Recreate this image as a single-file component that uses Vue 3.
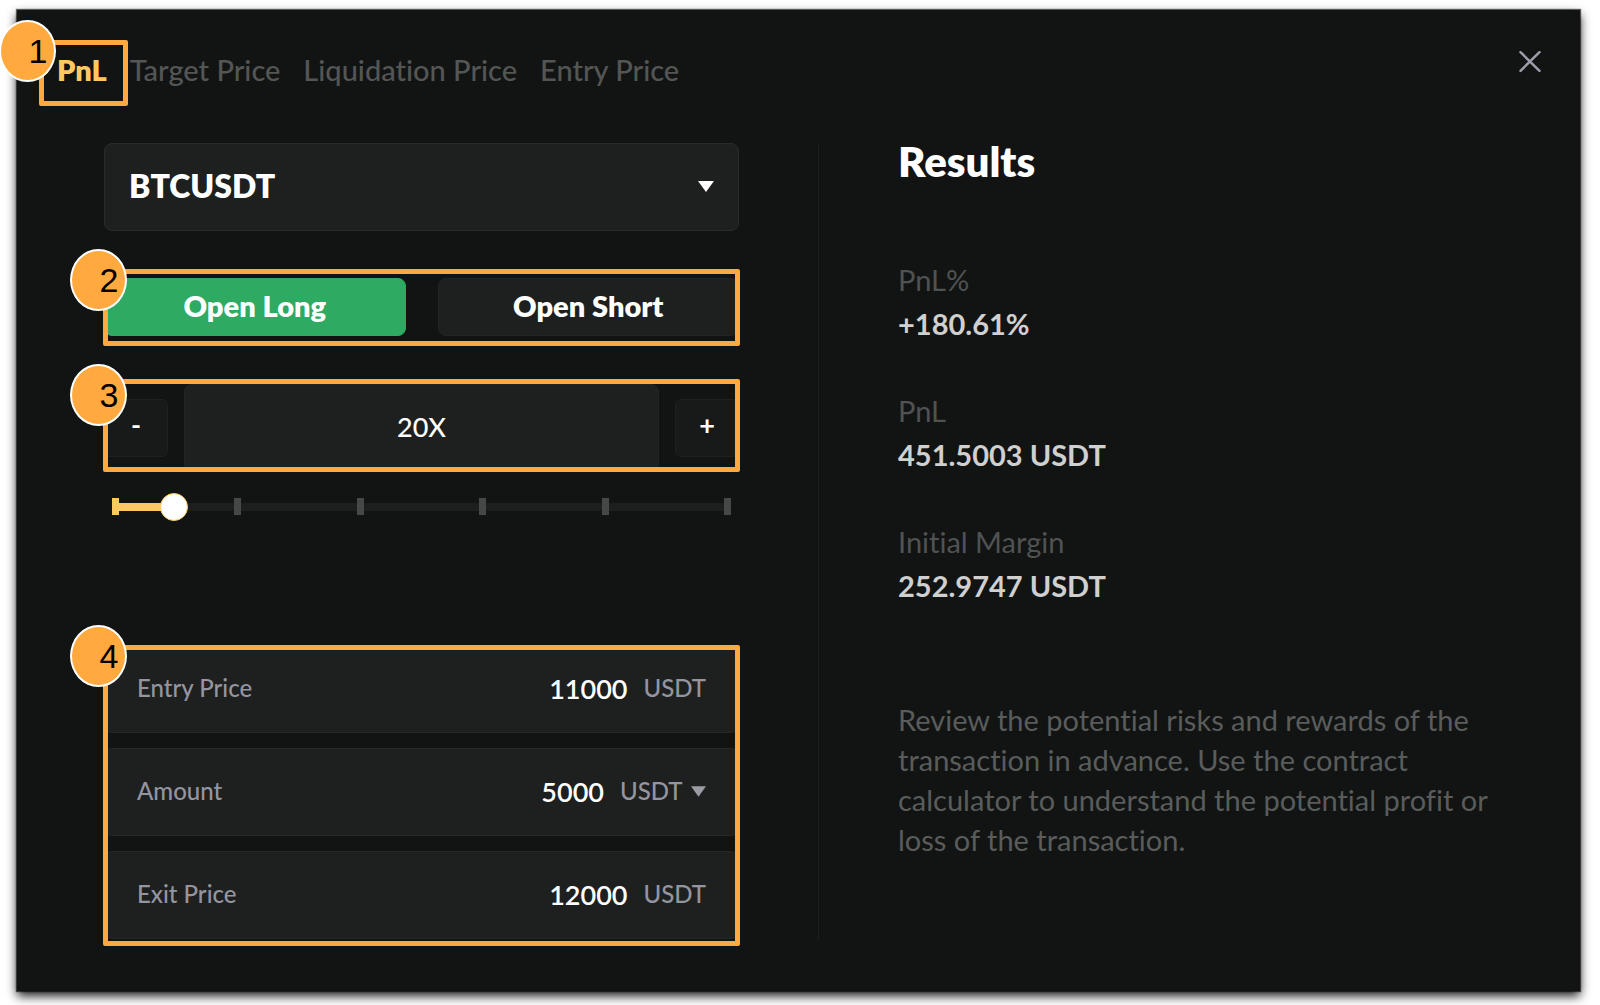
<script setup>
import { ref, computed } from 'vue'

const tabs = ['PnL', 'Target Price', 'Liquidation Price', 'Entry Price']
const activeTab = ref('PnL')
const pair = ref('BTCUSDT')
const side = ref('long')

const MIN_LEVERAGE = 1
const MAX_LEVERAGE = 200
const leverage = ref(20)
const leverageLabel = computed(() => `${leverage.value}X`)
const filled = computed(
  () => ((leverage.value - MIN_LEVERAGE) / (MAX_LEVERAGE - MIN_LEVERAGE)) * 100
)
function step(by) {
  leverage.value = Math.min(MAX_LEVERAGE, Math.max(MIN_LEVERAGE, Number(leverage.value) + by))
}

const fields = ref([
  { id: 'entry', label: 'Entry Price', value: '11000', unit: 'USDT', choice: false },
  { id: 'amount', label: 'Amount', value: '5000', unit: 'USDT', choice: true },
  { id: 'exit', label: 'Exit Price', value: '12000', unit: 'USDT', choice: false },
])

const results = [
  { label: 'PnL%', value: '+180.61%' },
  { label: 'PnL', value: '451.5003 USDT' },
  { label: 'Initial Margin', value: '252.9747 USDT' },
]
</script>

<template>
  <div class="page">
    <section class="dialog">
      <header class="header">
        <nav class="tabs">
          <div v-for="tab in tabs" :key="tab" class="tab-slot">
            <button
              type="button"
              class="tab"
              :class="{ active: tab === activeTab }"
              @click="activeTab = tab"
            >{{ tab }}</button>
            <div v-if="tab === 'PnL'" class="mark mark-tab"><span class="badge">1</span></div>
          </div>
        </nav>
        <button type="button" class="close" aria-label="Close">
          <svg viewBox="0 0 22 22" width="22" height="22">
            <path d="M1.5 1.2 20.5 19.8M20.5 1.2 1.5 19.8" fill="none" stroke="#9c9caa" stroke-width="2.5" stroke-linecap="round" />
          </svg>
        </button>
      </header>

      <main class="body">
        <form class="form" @submit.prevent>
          <div class="pair">
            <select v-model="pair" aria-label="Contract">
              <option>BTCUSDT</option>
            </select>
            <svg class="caret" viewBox="0 0 16 11" width="16" height="11"><path d="M0 0h16L8 11z" fill="#fff" /></svg>
          </div>

          <div class="sides">
            <button type="button" class="side" :class="{ long: side === 'long' }" @click="side = 'long'">Open Long</button>
            <button type="button" class="side" :class="{ short: side === 'short' }" @click="side = 'short'">Open Short</button>
            <div class="mark mark-sides"><span class="badge">2</span></div>
          </div>

          <div class="stepper">
            <button type="button" class="step" @click="step(-1)">-</button>
            <input class="leverage" type="text" readonly aria-label="Leverage" :value="leverageLabel" />
            <button type="button" class="step" @click="step(1)">+</button>
            <div class="mark mark-stepper"><span class="badge">3</span></div>
          </div>

          <div class="slider">
            <div class="track"><div class="fill" :style="{ width: filled + '%' }"></div></div>
            <div class="ticks">
              <i v-for="n in 6" :key="n" class="tick" :class="{ on: n === 1 }"></i>
            </div>
            <input
              v-model="leverage"
              class="range"
              type="range"
              aria-label="Leverage slider"
              :min="MIN_LEVERAGE"
              :max="MAX_LEVERAGE"
            />
          </div>

          <div class="fields">
            <div v-for="f in fields" :key="f.id" class="field">
              <label :for="f.id">{{ f.label }}</label>
              <input :id="f.id" v-model="f.value" type="text" />
              <div v-if="f.choice" class="unit-choice">
                <select v-model="f.unit" class="unit" aria-label="Amount unit">
                  <option>USDT</option>
                </select>
                <svg viewBox="0 0 16 11" width="15" height="11"><path d="M0 0h16L8 11z" fill="#9a9ba3" /></svg>
              </div>
              <span v-else class="unit">{{ f.unit }}</span>
            </div>
            <div class="mark mark-fields"><span class="badge">4</span></div>
          </div>
        </form>

        <div class="divider"></div>

        <section class="results">
          <h2>Results</h2>
          <dl>
            <div v-for="r in results" :key="r.label" class="result">
              <dt>{{ r.label }}</dt>
              <dd>{{ r.value }}</dd>
            </div>
          </dl>
          <p>
            Review the potential risks and rewards of the transaction in advance. Use the
            contract calculator to understand the potential profit or loss of the transaction.
          </p>
        </section>
      </main>
    </section>
  </div>
</template>

<style>
body {
  margin: 0;
  background: #fff;
}
</style>

<style scoped>
* {
  box-sizing: border-box;
}

.page {
  display: flex;
  min-height: 100vh;
  padding: 10px 20px 14px 17px;
  overflow: hidden;
}

.dialog {
  flex: 1;
  padding: 41px 0 50px;
  background: #111413;
  box-shadow: 0 0 1px 1px rgba(0, 0, 0, 0.6), 0 5px 10px rgba(0, 0, 0, 0.9);
  font-family: Lato, "Liberation Sans", sans-serif;
  font-variant-ligatures: none;
  color: #fff;
}

button,
input,
select {
  margin: 0;
  padding: 0;
  border: 0;
  background: none;
  color: inherit;
  font-family: inherit;
  font-variant-ligatures: inherit;
  appearance: none;
  outline: none;
}

button {
  cursor: pointer;
}

/* header */
.header {
  display: flex;
  justify-content: space-between;
  align-items: flex-start;
  padding: 0 39px 0 40px;
}

.tabs {
  display: flex;
  gap: 23px;
}

.tab-slot {
  position: relative;
}

.tab {
  display: block;
  font-size: 29px;
  line-height: 38px;
  font-weight: 500;
  color: #545655;
}

.tab.active {
  font-weight: 800;
  color: #ffc95f;
}

.close {
  display: flex;
}

/* two columns */
.body {
  display: grid;
  grid-template-columns: 635fr 1px 604fr;
  column-gap: 79px;
  margin-top: 54px;
  padding: 0 78px 0 87px;
}

.form {
  display: flex;
  flex-direction: column;
}

.divider {
  background: #1c1f1e;
}

.pair {
  position: relative;
}

.pair select {
  display: block;
  width: 100%;
  height: 88px;
  padding: 0 24px 4px;
  border: 1px solid #292b2a;
  border-radius: 8px;
  background: #1e201f;
  font-size: 32px;
  font-weight: 800;
}

.caret {
  position: absolute;
  top: 38px;
  right: 25px;
  pointer-events: none;
}

.sides {
  position: relative;
  display: flex;
  gap: 32px;
  margin-top: 47px;
}

.side {
  flex: 1;
  height: 58px;
  padding-bottom: 4px;
  border: 1px solid #232524;
  border-radius: 8px;
  background: #1e201f;
  font-size: 29px;
  font-weight: 800;
}

.side.long {
  border-color: #2eaa62;
  background: #2eaa62;
}

.side.short {
  border-color: #e0434b;
  background: #e0434b;
}

.stepper {
  position: relative;
  display: flex;
  align-items: center;
  gap: 16px;
  margin-top: 48px;
}

.step {
  width: 64px;
  height: 58px;
  padding-bottom: 8px;
  border: 1px solid #1f2120;
  border-radius: 6px;
  background: #171a19;
  font-size: 27px;
  font-weight: 700;
}

.leverage {
  flex: 1;
  min-width: 0;
  height: 88px;
  padding-bottom: 4px;
  border: 1px solid #232524;
  border-radius: 8px;
  background: #1e201f;
  font-size: 27px;
  font-weight: 500;
  text-align: center;
}

.slider {
  position: relative;
  height: 17px;
  margin: 26px 8px 0;
}

.track {
  position: absolute;
  inset: 5px 3px 4px;
  background: #1c1f1e;
}

.fill {
  height: 100%;
  background: #ffc95f;
}

.ticks {
  position: relative;
  display: flex;
  justify-content: space-between;
}

.tick {
  width: 7px;
  height: 17px;
  background: #464847;
}

.tick.on {
  background: #ffc95f;
}

.range {
  position: absolute;
  inset: -5px -11px;
  width: calc(100% + 22px);
  height: 28px;
}

.range::-webkit-slider-thumb {
  appearance: none;
  width: 28px;
  height: 28px;
  border: 1px solid #ffc95f;
  border-radius: 50%;
  background: #fff;
}

.fields {
  position: relative;
  display: flex;
  flex-direction: column;
  gap: 15px;
  margin-top: 130px;
}

.field {
  display: flex;
  align-items: center;
  height: 88px;
  padding: 0 32px 2px;
  border: 1px solid #262827;
  border-radius: 8px;
  background: #1e201f;
}

.field label,
.unit {
  font-size: 24px;
  line-height: 30px;
  font-weight: 500;
  color: #9495a0;
}

.field input {
  flex: 1;
  min-width: 0;
  margin-right: 16px;
  font-size: 27px;
  font-weight: 600;
  text-align: right;
}

.unit-choice {
  display: flex;
  align-items: center;
  gap: 8px;
}

/* numbered call-outs */
.mark {
  position: absolute;
  border: 5px solid #ffa93f;
  border-radius: 2px;
  pointer-events: none;
}

.mark-tab {
  inset: -11px -21px -17px -18px;
}

.mark-sides {
  inset: -9px -1px -10px;
}

.mark-stepper {
  inset: -5px -1px 0;
}

.mark-fields {
  inset: 0 -1px -7px;
}

.badge {
  position: absolute;
  top: -25px;
  left: -38px;
  display: flex;
  align-items: center;
  justify-content: center;
  width: 57px;
  height: 62px;
  padding-left: 21px;
  border: 2px solid #fff;
  border-radius: 50%;
  background: #ffa93f;
  color: #000;
  font-family: "Liberation Sans", Arial, sans-serif;
  font-size: 34px;
  line-height: 40px;
}

.mark-tab .badge {
  left: -45px;
}

.mark-stepper .badge {
  top: -20px;
}

/* results */
.results h2 {
  margin: 0;
  font-size: 42px;
  line-height: 36px;
  font-weight: 800;
}

.results dl {
  display: flex;
  flex-direction: column;
  gap: 51px;
  margin: 83px 0 0;
}

.result {
  display: flex;
  flex-direction: column;
  gap: 8px;
  font-size: 29px;
  line-height: 36px;
}

.result dt {
  color: #505251;
}

.result dd {
  margin: 0;
  font-weight: 700;
  color: #cfd0cf;
}

.results p {
  margin: 96px 0 0;
  font-size: 29px;
  line-height: 40px;
  color: #5a5c5b;
}
</style>
